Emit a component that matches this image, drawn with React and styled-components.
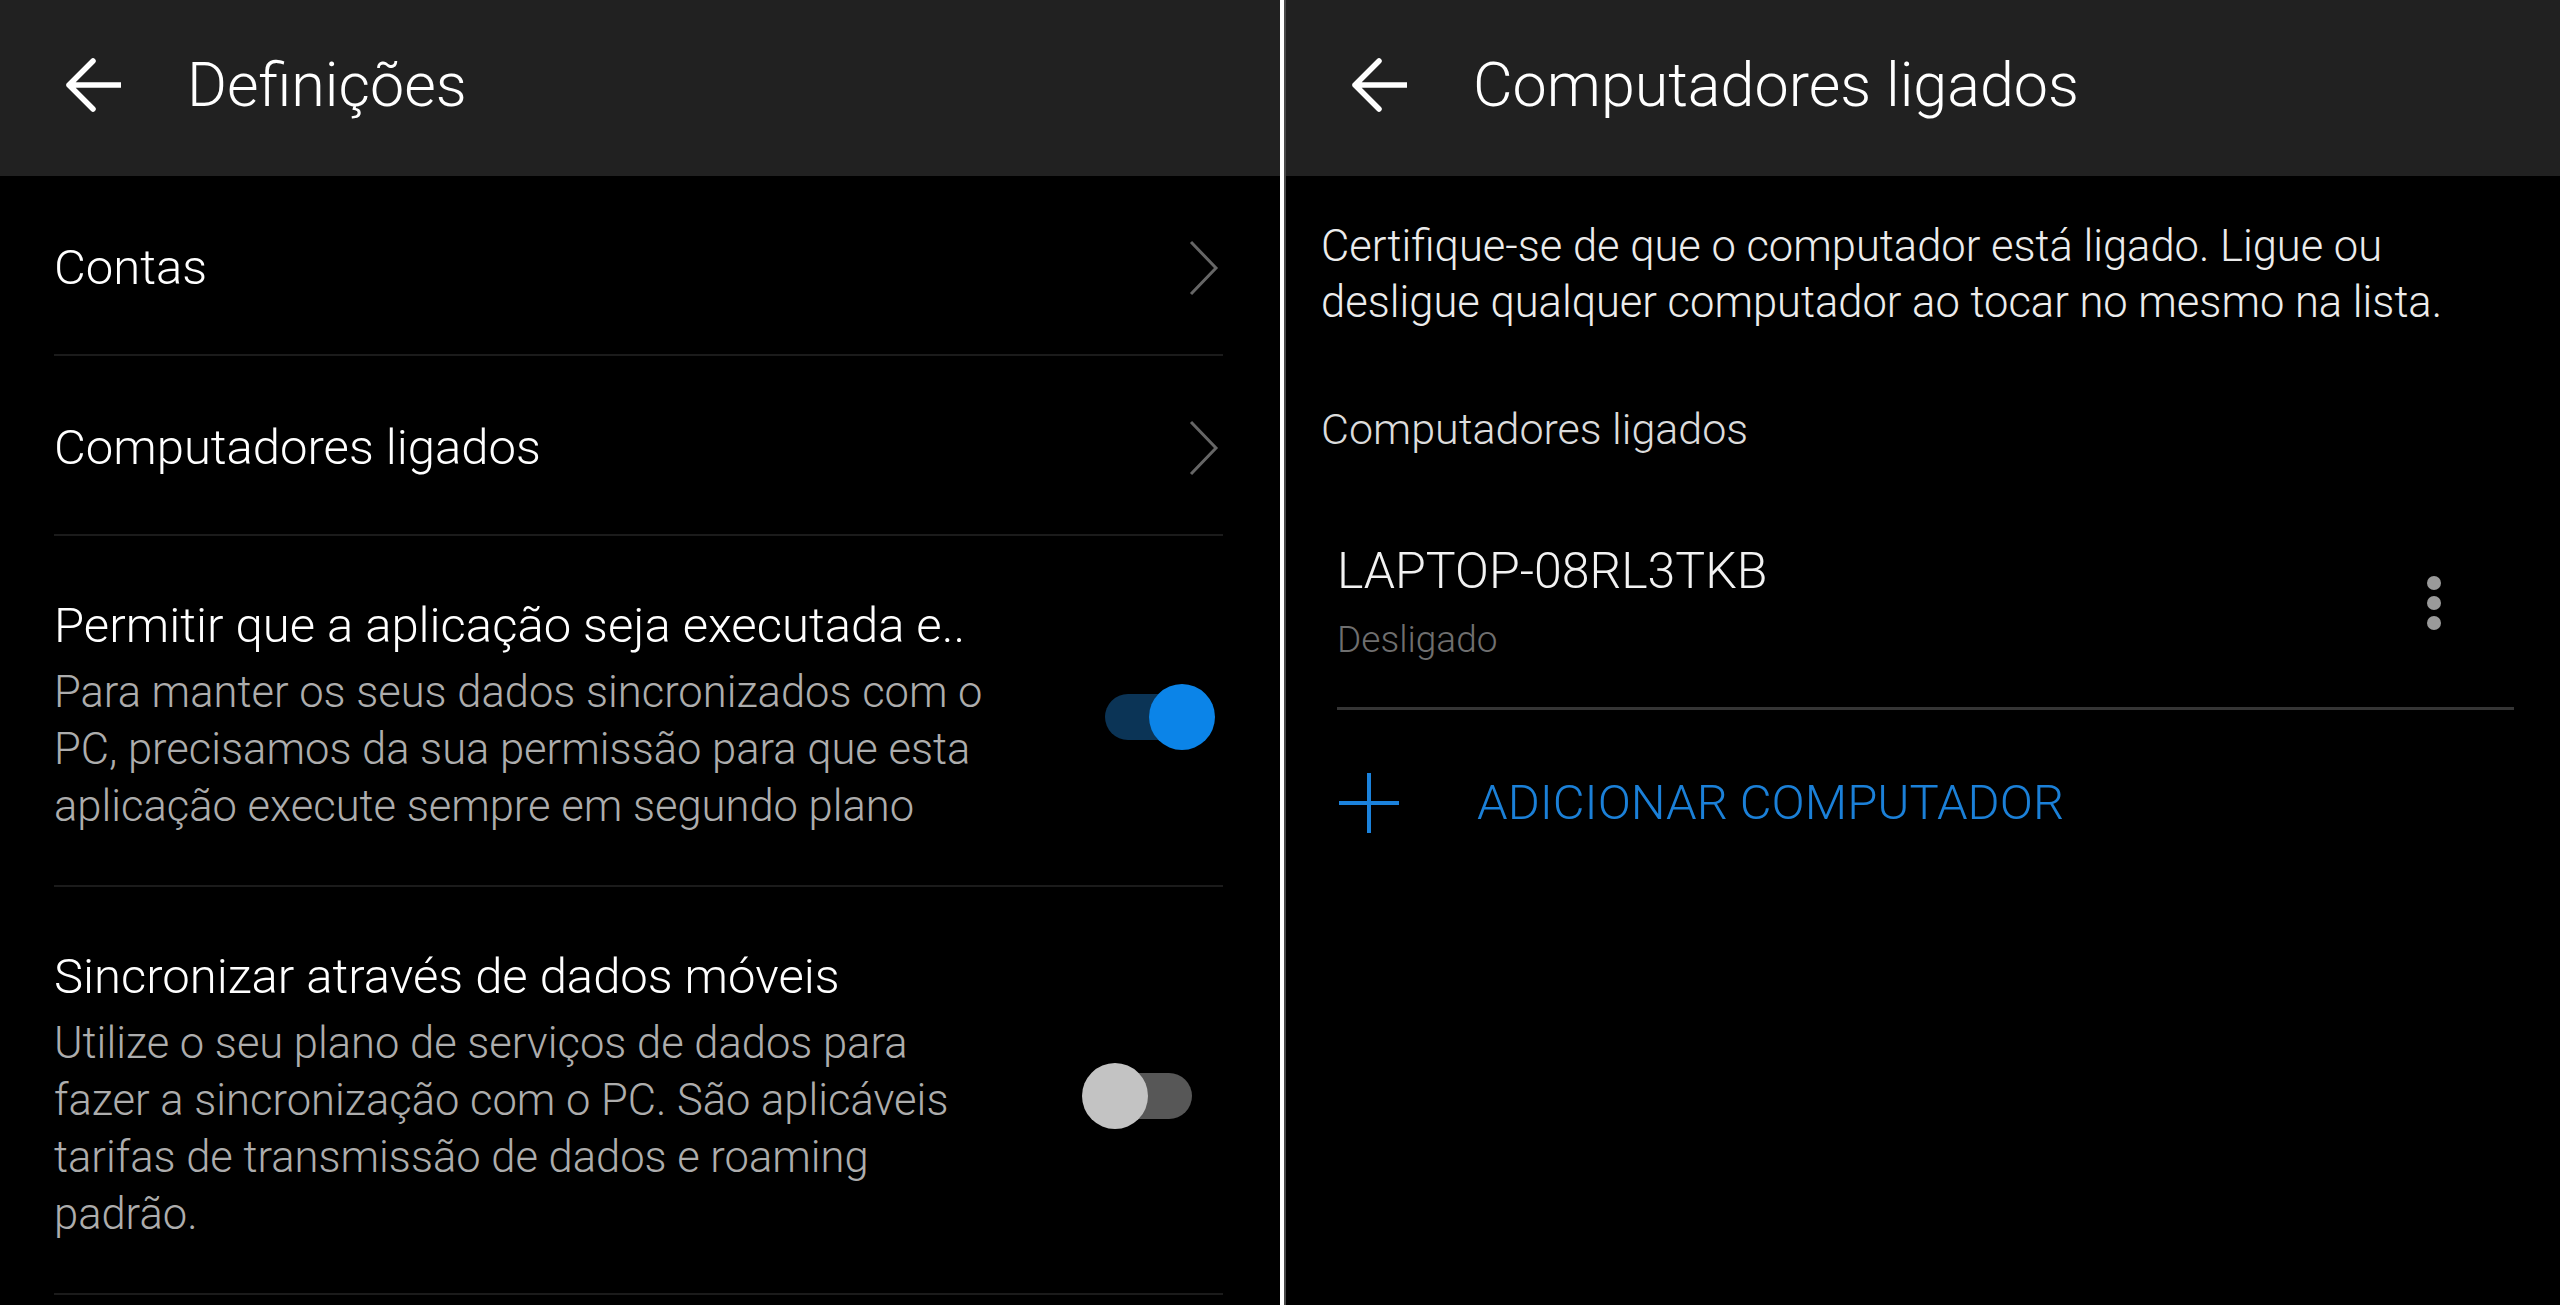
import React from "react";
import styled, { createGlobalStyle } from "styled-components";

const GlobalStyle = createGlobalStyle`
  html, body {
    margin: 0;
    padding: 0;
    background: #000;
  }
  body {
    font-family: Roboto, "Noto Sans", sans-serif;
    font-weight: 300;
    color: #fff;
  }
`;

const Screen = styled.div`
  display: grid;
  grid-template-columns: 1280px 6px 1fr;
  height: 1305px;
  overflow: hidden;
  background: #000;
`;

const Divider = styled.div`
  background: linear-gradient(to right, #fff 0 4px, #4a4a4a 4px 6px);
`;

const Panel = styled.section`
  display: flex;
  flex-direction: column;
  min-width: 0;
`;

const Header = styled.header`
  height: 176px;
  box-sizing: border-box;
  background: #212121;
  display: flex;
  align-items: center;
  gap: 66px;
  padding: 0 0 6px 65px;
`;

const HeaderTitle = styled.h1`
  margin: 0;
  font-size: 61px;
  line-height: 70px;
  font-weight: 300;
  color: #fff;
  white-space: nowrap;
`;

const List = styled.div`
  display: flex;
  flex-direction: column;
  padding: 0 57px 0 54px;
`;

const Row = styled.div`
  display: flex;
  align-items: center;
  border-bottom: 2px solid #1b1b1b;
  padding: ${(p) => (p.$tall ? "62px 0 50px" : "64px 0 58px")};
`;

const RowText = styled.div`
  flex: 1;
  min-width: 0;
`;

const Label = styled.div`
  font-size: 49px;
  line-height: 56px;
  color: #fff;
  white-space: nowrap;
`;

const Description = styled.div`
  margin-top: 10px;
  font-size: 43.5px;
  line-height: 57px;
  color: #adadad;
  white-space: nowrap;
`;

const Chevron = styled.svg`
  width: 30px;
  height: 56px;
  margin-right: 4px;
  flex-shrink: 0;
`;

const Toggle = styled.div`
  position: relative;
  width: 133px;
  height: 66px;
  margin-right: 8px;
  flex-shrink: 0;
`;

const Track = styled.div`
  position: absolute;
  left: 23px;
  right: 23px;
  top: 10px;
  height: 46px;
  border-radius: 23px;
  background: ${(p) => (p.$on ? "#0b3456" : "#575757")};
`;

const Thumb = styled.div`
  position: absolute;
  top: 0;
  ${(p) => (p.$on ? "right: 0;" : "left: 0;")}
  width: 66px;
  height: 66px;
  border-radius: 50%;
  background: ${(p) => (p.$on ? "#0b84e8" : "#c3c3c3")};
`;

const Content = styled.div`
  display: flex;
  flex-direction: column;
  padding: 43px 46px 0 35px;
`;

const Intro = styled.p`
  margin: 0;
  font-size: 43.5px;
  line-height: 56px;
  color: #ececec;
  white-space: nowrap;
`;

const SectionLabel = styled.div`
  margin-top: 70px;
  font-size: 43px;
  line-height: 56px;
  color: #dcdcdc;
`;

const Computer = styled.div`
  display: flex;
  align-items: center;
  margin-left: 16px;
  padding: 86px 0 45px;
  border-bottom: 3px solid #353535;
`;

const ComputerInfo = styled.div`
  flex: 1;
`;

const ComputerName = styled.div`
  font-size: 50px;
  line-height: 56px;
  color: #f2f2f2;
`;

const ComputerStatus = styled.div`
  margin-top: 19px;
  font-size: 37px;
  line-height: 44px;
  color: #6f6f6f;
`;

const Dots = styled.div`
  display: flex;
  flex-direction: column;
  gap: 6px;
  margin-right: 73px;
`;

const Dot = styled.span`
  width: 14px;
  height: 14px;
  border-radius: 50%;
  background: #9a9a9a;
`;

const AddRow = styled.div`
  display: flex;
  align-items: center;
  gap: 78px;
  padding: 63px 0 0 18px;
`;

const AddLabel = styled.div`
  font-size: 49px;
  line-height: 60px;
  color: #1b80d8;
  text-transform: uppercase;
`;

const BackArrow = () => (
  <svg width="56" height="56" viewBox="0 0 56 56" fill="none">
    <path
      d="M28 4 L4 28 L28 52 M4 28 H55"
      stroke="#fff"
      strokeWidth="5.5"
      strokeLinecap="round"
      strokeLinejoin="round"
    />
  </svg>
);

const NavChevron = () => (
  <Chevron viewBox="0 0 30 56" fill="none">
    <path d="M2 2 L27 28 L2 54" stroke="#666" strokeWidth="3" />
  </Chevron>
);

const Switch = ({ on }) => (
  <Toggle>
    <Track $on={on} />
    <Thumb $on={on} />
  </Toggle>
);

const PlusIcon = () => (
  <svg width="60" height="60" viewBox="0 0 60 60">
    <path d="M30 0 V60 M0 30 H60" stroke="#1b82dc" strokeWidth="4" />
  </svg>
);

const App = () => {
  return (
    <>
      <GlobalStyle />
      <Screen>
        <Panel>
          <Header>
            <BackArrow />
            <HeaderTitle>Definições</HeaderTitle>
          </Header>
          <List>
            <Row>
              <RowText>
                <Label>Contas</Label>
              </RowText>
              <NavChevron />
            </Row>
            <Row>
              <RowText>
                <Label>Computadores ligados</Label>
              </RowText>
              <NavChevron />
            </Row>
            <Row $tall>
              <RowText>
                <Label>Permitir que a aplicação seja executada e..</Label>
                <Description>
                  Para manter os seus dados sincronizados com o<br />
                  PC, precisamos da sua permissão para que esta<br />
                  aplicação execute sempre em segundo plano
                </Description>
              </RowText>
              <Switch on />
            </Row>
            <Row $tall>
              <RowText>
                <Label>Sincronizar através de dados móveis</Label>
                <Description>
                  Utilize o seu plano de serviços de dados para<br />
                  fazer a sincronização com o PC. São aplicáveis<br />
                  tarifas de transmissão de dados e roaming<br />
                  padrão.
                </Description>
              </RowText>
              <Switch />
            </Row>
          </List>
        </Panel>
        <Divider />
        <Panel>
          <Header>
            <BackArrow />
            <HeaderTitle>Computadores ligados</HeaderTitle>
          </Header>
          <Content>
            <Intro>
              Certifique-se de que o computador está ligado. Ligue ou<br />
              desligue qualquer computador ao tocar no mesmo na lista.
            </Intro>
            <SectionLabel>Computadores ligados</SectionLabel>
            <Computer>
              <ComputerInfo>
                <ComputerName>LAPTOP-08RL3TKB</ComputerName>
                <ComputerStatus>Desligado</ComputerStatus>
              </ComputerInfo>
              <Dots>
                <Dot />
                <Dot />
                <Dot />
              </Dots>
            </Computer>
            <AddRow>
              <PlusIcon />
              <AddLabel>Adicionar computador</AddLabel>
            </AddRow>
          </Content>
        </Panel>
      </Screen>
    </>
  );
};

export default App;
